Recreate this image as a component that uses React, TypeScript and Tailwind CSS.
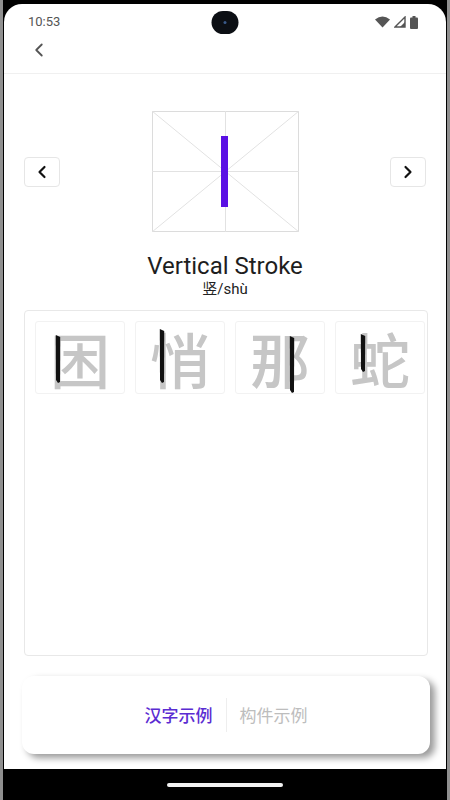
import React from "react";
import { ChevronLeft, ChevronRight } from "lucide-react";

interface Example {
  char: string;
  // black stroke, in tile coords
  x: number;
  y1: number;
  y2: number;
}

const examples: Example[] = [
  { char: "困", x: 22, y1: 13, y2: 60 },
  { char: "悄", x: 26, y1: 7, y2: 60 },
  { char: "那", x: 56, y1: 14, y2: 70 },
  { char: "蛇", x: 27, y1: 12, y2: 49 },
];

const StatusBar: React.FC = () => (
  <div className="h-[36px] flex items-center justify-between px-[24px] relative">
    <span className="text-[13px] text-[#555] font-['Roboto',sans-serif]">10:53</span>
    <div className="absolute left-1/2 top-[7px] -translate-x-1/2 w-[27px] h-[23px] rounded-full bg-[#0c0f14] flex items-center justify-center">
      <div className="w-[3px] h-[3px] rounded-full bg-[#3a5a8a]" />
    </div>
    <div className="flex items-center gap-[4px] pr-[4px]">
      <svg width="15" height="12" viewBox="0 0 15 12">
        <path d="M0 3.5 Q7.5 -2.5 15 3.5 L7.5 11.5 Z" fill="#555" />
      </svg>
      <svg width="12" height="12" viewBox="0 0 12 12">
        <path d="M11 1 L11 11 L1 11 Z" fill="none" stroke="#555" strokeWidth="1.4" />
        <path d="M11 6 L11 11 L6 11 Z" fill="#555" />
      </svg>
      <svg width="8" height="13" viewBox="0 0 8 13">
        <rect x="2.5" y="0" width="3" height="2" fill="#555" />
        <rect x="0" y="1.5" width="8" height="11.5" rx="1" fill="#555" />
      </svg>
    </div>
  </div>
);

const StrokeGrid: React.FC = () => (
  <svg width="147" height="121" viewBox="0 0 147 121">
    <rect x="0.5" y="0.5" width="146" height="120" fill="#fff" stroke="#dcdcdc" />
    <line x1="0" y1="0" x2="147" y2="121" stroke="#e2e2e2" />
    <line x1="147" y1="0" x2="0" y2="121" stroke="#e2e2e2" />
    <line x1="73.5" y1="0" x2="73.5" y2="121" stroke="#e2e2e2" />
    <line x1="0" y1="60.5" x2="147" y2="60.5" stroke="#e2e2e2" />
    <rect x="69" y="25" width="7" height="71" fill="#5a10e4" />
  </svg>
);

const ExampleTile: React.FC<{ ex: Example }> = ({ ex }) => (
  <div className="relative w-[90px] h-[73px] shrink-0 rounded-[3px] border border-[#f2f2f2] flex items-center justify-center">
    <span className="text-[60px] leading-none text-[#c6c6c6] font-medium font-['Noto_Sans_CJK_SC',sans-serif]">
      {ex.char}
    </span>
    <svg className="absolute left-0 top-0" width="90" height="73" viewBox="0 0 90 73">
      <path
        d={`M${ex.x - 2.2} ${ex.y1} L${ex.x + 2.2} ${ex.y1 + 2} L${ex.x + 2} ${ex.y2} L${ex.x} ${ex.y2 + 1} L${ex.x - 2} ${ex.y2 - 2} Z`}
        fill="#111"
      />
    </svg>
  </div>
);

const App: React.FC = () => {
  return (
    <div className="w-[450px] h-[800px] bg-black flex flex-col pt-[4px] px-[1px] border-x-[3px] border-[#8f8f8f] box-border">
      <div className="h-[765px] bg-white rounded-t-[18px] flex flex-col">
        <StatusBar />
        <div className="h-[34px] pb-[14px] box-border border-b border-[#f0f0f0] flex items-center pl-[24px]">
          <ChevronLeft size={22} strokeWidth={2} color="#555" />
        </div>

        <div className="mt-[37px] flex items-center justify-between px-[20px]">
          <button className="w-[36px] h-[30px] rounded-[4px] border border-[#e6e6e6] flex items-center justify-center">
            <ChevronLeft size={20} strokeWidth={2.6} color="#111" />
          </button>
          <StrokeGrid />
          <button className="w-[36px] h-[30px] rounded-[4px] border border-[#e6e6e6] flex items-center justify-center">
            <ChevronRight size={20} strokeWidth={2.6} color="#111" />
          </button>
        </div>

        <div className="mt-[21px] flex flex-col items-center">
          <h1 className="text-[24px] leading-[26px] text-[#1e1e1e] font-['Roboto',sans-serif]">
            Vertical Stroke
          </h1>
          <p className="text-[15px] leading-[20px] text-[#222] font-['Roboto','Noto_Sans_CJK_SC',sans-serif]">
            竖/shù
          </p>
        </div>

        <div className="mt-[11px] ml-[20px] mr-[18px] h-[346px] border border-[#e8e8e8] rounded-[4px] pt-[10px] pl-[10px] flex items-start gap-[10px] overflow-hidden">
          {examples.map((ex) => (
            <ExampleTile key={ex.char} ex={ex} />
          ))}
        </div>

        <div className="mt-[20px] ml-[18px] mr-[16px] h-[78px] rounded-[12px] bg-white shadow-[5px_4px_7px_rgba(0,0,0,0.4)] flex items-center justify-center gap-[13px] font-['Noto_Sans_CJK_SC',sans-serif]">
          <span className="text-[17px] font-medium text-[#5b2cd2]">汉字示例</span>
          <div className="w-[1px] h-[34px] bg-[#eeeeee]" />
          <span className="text-[17px] text-[#bdbdbd]">构件示例</span>
        </div>
      </div>
      <div className="flex-1 flex items-center justify-center">
        <div className="w-[116px] h-[4px] rounded-full bg-[#f2f2f2]" />
      </div>
    </div>
  );
};

export default App;
